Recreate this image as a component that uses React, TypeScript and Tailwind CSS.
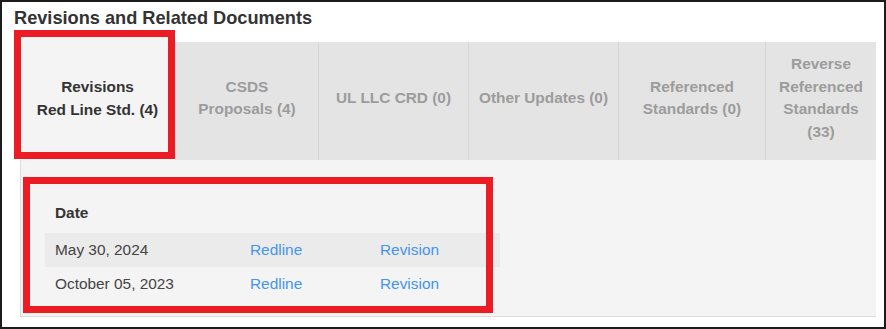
import React from "react";

const tabs = [
  { lines: ["Revisions", "Red Line Std. (4)"], w: "w-[155px]", active: true },
  { lines: ["CSDS", "Proposals (4)"], w: "w-[143px]" },
  { lines: ["UL LLC CRD (0)"], w: "w-[150px]" },
  { lines: ["Other Updates (0)"], w: "w-[150px]" },
  { lines: ["Referenced", "Standards (0)"], w: "w-[147px]" },
  { lines: ["Reverse", "Referenced", "Standards", "(33)"], w: "w-[111px]" },
];

const rows = [
  { date: "May 30, 2024", shaded: true },
  { date: "October 05, 2023", shaded: false },
];

export default function App() {
  return (
    <div
      className="relative w-[886px] h-[329px] border-2 border-[#1c1c1c] bg-white box-border overflow-hidden"
      style={{ fontFamily: '"Liberation Sans", Arial, sans-serif' }}
    >
      <div className="pl-[12px] pt-[5px] text-[18.2px] leading-[22px] font-bold text-[#333]">
        Revisions and Related Documents
      </div>
      <div className="ml-[18px] mt-[8px] w-[856px]">
        <div className="flex items-end h-[123px]">
          {tabs.map((t, i) => (
            <div
              key={i}
              className={
                t.w +
                " flex flex-col items-center justify-center text-center text-[15.4px] leading-[22.5px] font-bold " +
                (t.active
                  ? "h-[123px] bg-[#f4f4f4] text-[#333]"
                  : "h-[118px] bg-[#e4e4e4] text-[#9c9c9c] border-l border-[#d6d6d6] pb-[6px]")
              }
            >
              {t.lines.map((l, j) => (
                <div key={j}>{l}</div>
              ))}
            </div>
          ))}
        </div>
        <div className="h-[157px] bg-[#f4f4f4] border-l border-b border-[#dcdcdc] pl-[24px] pt-[33px]">
          <div className="w-[455px] text-[15.4px] text-[#333]">
            <div className="h-[40px] flex items-center pl-[10px] font-bold">Date</div>
            {rows.map((r, i) => (
              <div
                key={i}
                className={
                  "h-[34px] flex items-center pl-[10px] " + (r.shaded ? "bg-[#ebebeb]" : "")
                }
              >
                <div className="w-[195px] text-[#444]">{r.date}</div>
                <div className="w-[130px] text-[#4395ee]">Redline</div>
                <div className="text-[#4395ee]">Revision</div>
              </div>
            ))}
          </div>
        </div>
      </div>
      <div className="absolute left-[12px] top-[28px] w-[161px] h-[129px] border-[7px] border-[#ec1c24]" />
      <div className="absolute left-[21px] top-[175px] w-[470px] h-[136px] border-[7px] border-[#ec1c24]" />
    </div>
  );
}
